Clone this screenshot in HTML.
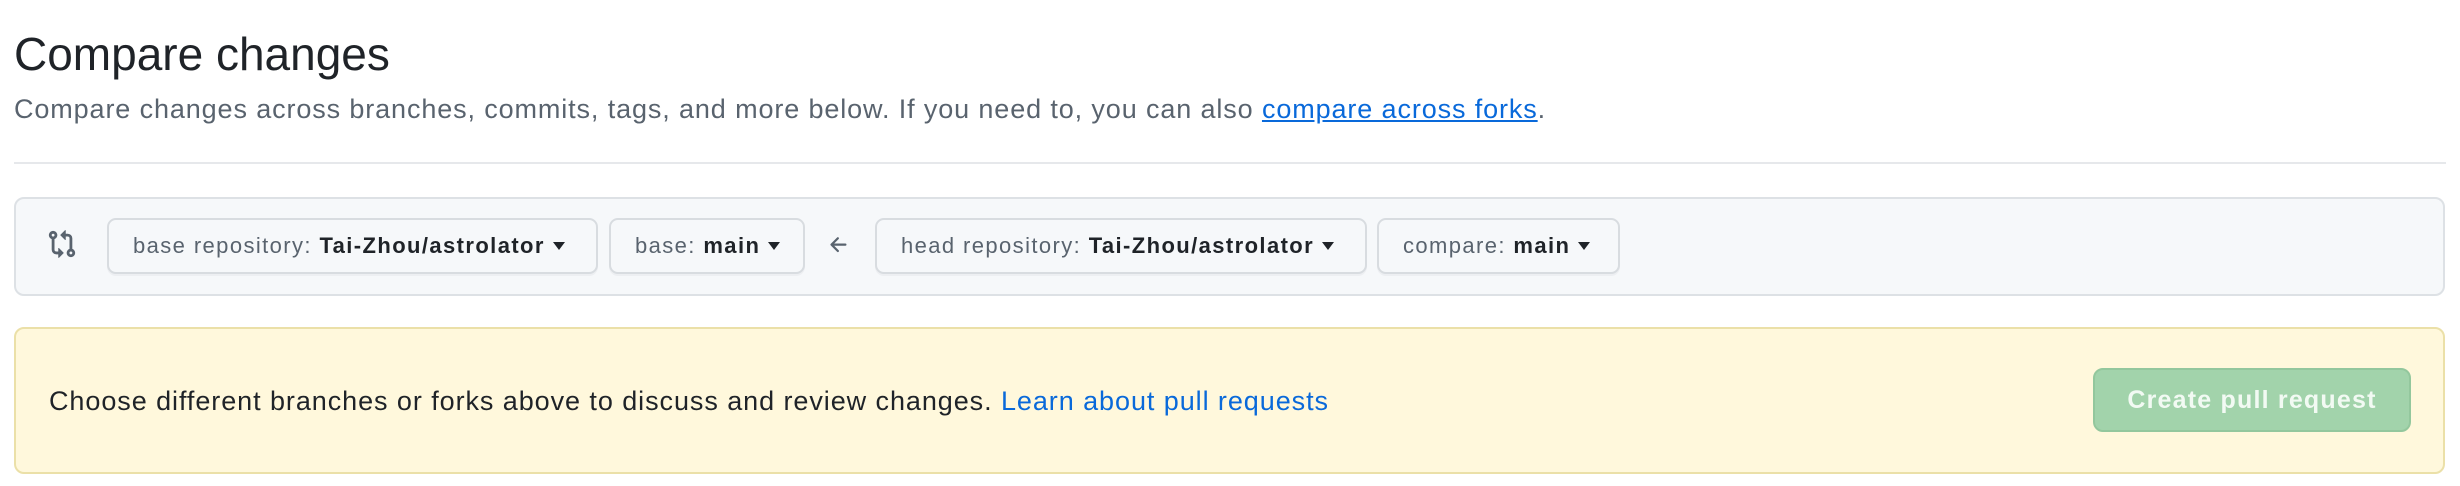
<!DOCTYPE html>
<html><head><meta charset="utf-8"><style>
*{box-sizing:border-box;margin:0;padding:0}
body{width:2460px;height:486px;background:#fff;font-family:"Liberation Sans",Arial,sans-serif;color:#1f2328;position:relative;overflow:hidden}
.abs{position:absolute}
h1{position:absolute;left:14px;top:26px;font-size:46px;font-weight:400;line-height:56px;white-space:nowrap}
.sub{left:14px;top:92px;font-size:27px;letter-spacing:0.88px;color:#59636e;white-space:nowrap;line-height:34px}
a{color:#0969da}
.sub a{text-decoration:underline}
.hr{left:14px;top:162px;width:2432px;height:2px;background:#e6e8eb}
.box{left:14px;top:197px;width:2431px;height:99px;background:#f6f8fa;border:2px solid #dde1e5;border-radius:10px}
.btn{position:absolute;top:218px;height:56px;background:#f6f8fa;border:2px solid #d8dce0;border-radius:9px;font-size:22px;letter-spacing:1.4px;color:#59636e;line-height:52px;padding-left:24px;white-space:nowrap;box-shadow:0 2px 0 rgba(31,35,40,.04)}
.btn b{color:#1f2328;font-weight:600}
.car{display:inline-block;width:0;height:0;border-left:6px solid transparent;border-right:6px solid transparent;border-top:8px solid #1f2328;vertical-align:middle;margin-left:8px;margin-top:-3px}
.flash{left:14px;top:327px;width:2431px;height:147px;background:#fff8dc;border:2px solid #ebe0a8;border-radius:10px}
.ft{left:49px;top:383px;font-size:27px;letter-spacing:0.93px;white-space:nowrap;line-height:36px}
.ft a{text-decoration:none}
.cpr{left:2093px;top:368px;width:318px;height:64px;background:#a2d3ab;border:2px solid #93c79d;border-radius:10px;color:#f2faf3;font-size:25px;letter-spacing:1.2px;font-weight:600;text-align:center;line-height:60px}
</style></head><body>
<h1>Compare changes</h1>
<div class="abs sub">Compare changes across branches, commits, tags, and more below. If you need to, you can also <a>compare across forks</a>.</div>
<div class="abs hr"></div>
<div class="abs box"></div>
<svg class="abs" style="left:47px;top:229px" width="30" height="30" viewBox="0 0 16 16" fill="#59636e"><path d="M9.573.677A.25.25 0 0 1 10 .854V2.5h1A2.5 2.5 0 0 1 13.5 5v5.628a2.251 2.251 0 1 1-1.5 0V5a1 1 0 0 0-1-1h-1v1.646a.25.25 0 0 1-.427.177L7.177 3.427a.25.25 0 0 1 0-.354ZM6 12v-1.646a.25.25 0 0 1 .427-.177l2.396 2.396a.25.25 0 0 1 0 .354l-2.396 2.396A.25.25 0 0 1 6 15.146V13.5H5A2.5 2.5 0 0 1 2.5 11V5.372a2.25 2.25 0 1 1 1.5 0V11a1 1 0 0 0 1 1ZM4 3.250a.75.75 0 1 0-1.5 0 .75.75 0 0 0 1.5 0ZM12.75 12a.75.75 0 1 0 0 1.5.75.75 0 0 0 0-1.5Z"/></svg>
<div class="btn" style="left:107px;width:491px">base repository: <b>Tai-Zhou/astrolator</b><span class="car"></span></div>
<div class="btn" style="left:609px;width:196px">base: <b>main</b><span class="car"></span></div>
<svg class="abs" style="left:827px;top:233px" width="24" height="24" viewBox="0 0 16 16" fill="#59636e"><path d="M7.78 12.53a.75.75 0 0 1-1.06 0L2.47 8.280a.75.75 0 0 1 0-1.06l4.25-4.25a.751.751 0 0 1 1.042.018.751.751 0 0 1 .018 1.042L4.81 7h7.44a.75.75 0 0 1 0 1.5H4.81l2.97 2.97a.75.75 0 0 1 0 1.06Z"/></svg>
<div class="btn" style="left:875px;width:492px">head repository: <b>Tai-Zhou/astrolator</b><span class="car"></span></div>
<div class="btn" style="left:1377px;width:243px">compare: <b>main</b><span class="car"></span></div>
<div class="abs flash"></div>
<div class="abs ft">Choose different branches or forks above to discuss and review changes. <a>Learn about pull requests</a></div>
<div class="abs cpr">Create pull request</div>
</body></html>
